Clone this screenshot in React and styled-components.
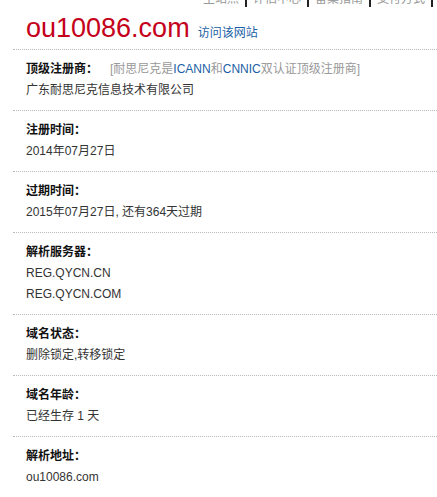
import styled, { createGlobalStyle } from "styled-components";

const GlobalStyle = createGlobalStyle`
  html, body {
    margin: 0;
    padding: 0;
    background: #fff;
    overflow: hidden;
  }
  body {
    font-family: "Liberation Sans", "Noto Sans CJK SC", sans-serif;
    font-size: 12px;
    color: #333;
  }
`;

const Page = styled.div`
  padding-left: 13px;
`;

const TopNav = styled.ul`
  display: flex;
  justify-content: flex-end;
  list-style: none;
  margin: -9px 0 0;
  padding: 0 4px 0 0;
  height: 16px;
  line-height: 16px;
  color: #999;
  font-size: 12px;

  li {
    padding: 0 6px;
    border-right: 2px solid #222;
  }
`;

const Header = styled.div`
  display: flex;
  align-items: baseline;
  gap: 8px;
  padding: 6px 13px 0;
  height: 36px;
  border-bottom: 1px dotted #bbb;
`;

const Domain = styled.h1`
  margin: 0;
  font-family: "Liberation Sans", sans-serif;
  font-weight: normal;
  font-size: 27px;
  line-height: 30px;
  color: #c4001a;
`;

const Link = styled.a`
  color: #1b5fa6;
  text-decoration: none;
  font-size: 12px;
`;

const Section = styled.div`
  padding: 9px 13px 9px;
  border-bottom: ${(p) => (p.$last ? "none" : "1px dotted #bbb")};
  line-height: 21px;
`;

const Label = styled.div`
  display: flex;
  gap: 12px;
  font-weight: bold;
  color: #111;
`;

const Note = styled.span`
  font-weight: normal;
  color: #999;

  em {
    font-style: normal;
    color: #1b5fa6;
  }
`;

const Value = styled.div`
  color: #333;
`;

const rows = [
  { label: "注册时间：", values: ["2014年07月27日"] },
  { label: "过期时间：", values: ["2015年07月27日, 还有364天过期"] },
  { label: "解析服务器：", values: ["REG.QYCN.CN", "REG.QYCN.COM"] },
  { label: "域名状态：", values: ["删除锁定,转移锁定"] },
  { label: "域名年龄：", values: ["已经生存 1 天"] },
  { label: "解析地址：", values: ["ou10086.com"] },
];

export default function App() {
  return (
    <Page>
      <GlobalStyle />
      <TopNav>
        <li>主站点</li>
        <li>评估中心</li>
        <li>备案指南</li>
        <li>支付方式</li>
      </TopNav>
      <Header>
        <Domain>ou10086.com</Domain>
        <Link href="#">访问该网站</Link>
      </Header>
      <Section>
        <Label>
          <span>顶级注册商：</span>
          <Note>
            [耐思尼克是<em>ICANN</em>和<em>CNNIC</em>双认证顶级注册商]
          </Note>
        </Label>
        <Value>广东耐思尼克信息技术有限公司</Value>
      </Section>
      {rows.map((r, i) => (
        <Section key={r.label} $last={i === rows.length - 1}>
          <Label>{r.label}</Label>
          {r.values.map((v) => (
            <Value key={v}>{v}</Value>
          ))}
        </Section>
      ))}
    </Page>
  );
}
